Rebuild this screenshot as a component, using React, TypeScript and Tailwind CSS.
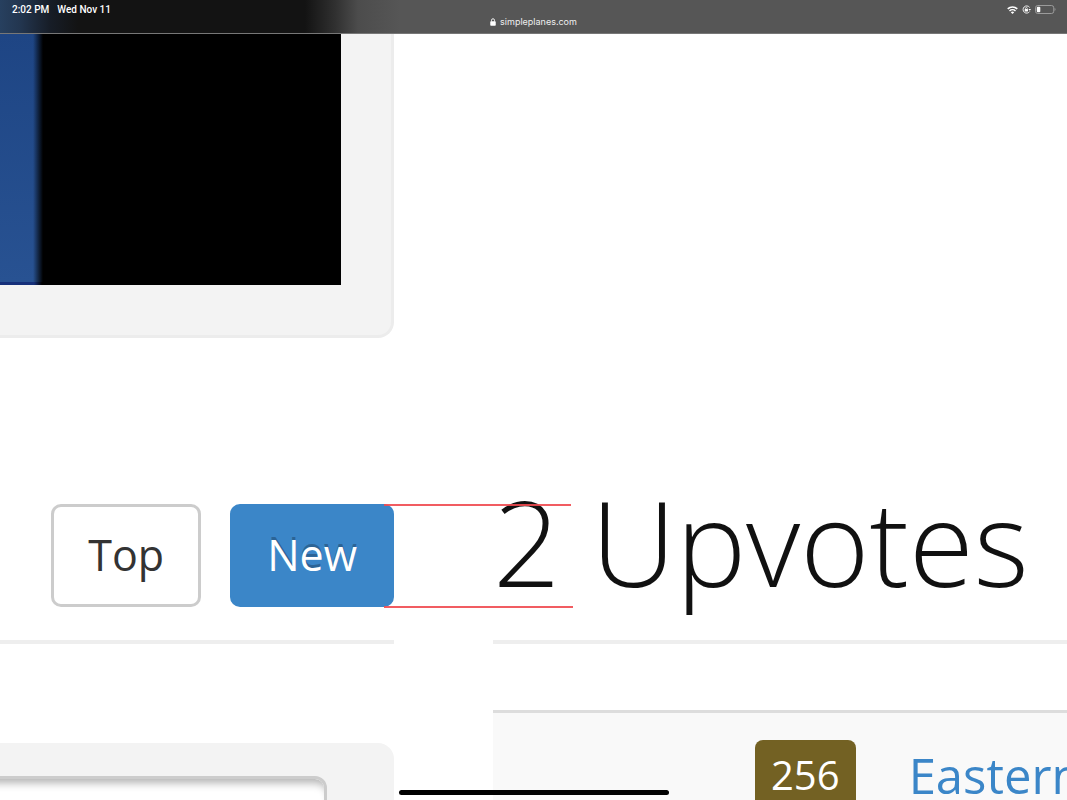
const SANS = "font-['Open_Sans','Noto_Sans',sans-serif]";

function LockIcon() {
  return (
    <svg viewBox="0 0 12 16" className="h-2 w-1.5" fill="none" aria-hidden="true">
      <path d="M3 7V4.5a3 3 0 0 1 6 0V7" stroke="white" strokeWidth="1.8" />
      <rect x="0.5" y="6.5" width="11" height="9" rx="1.5" fill="white" />
    </svg>
  );
}

function WifiIcon() {
  return (
    <svg viewBox="0 0 22 16" className="h-2 w-[11px]" fill="none" aria-hidden="true">
      <path d="M1.5 5.8a13.6 13.6 0 0 1 19 0" stroke="white" strokeWidth="3.2" />
      <path d="M5 9.8a8.6 8.6 0 0 1 12 0" stroke="white" strokeWidth="2.8" />
      <path d="M11 16l-3.4-3.6a4.9 4.9 0 0 1 6.8 0z" fill="white" />
    </svg>
  );
}

function RotationLockIcon() {
  return (
    <svg viewBox="0 0 18 18" className="h-[9px] w-[9px]" fill="none" aria-hidden="true">
      <path d="M15.2 4.8A7.2 7.2 0 1 0 15.4 13" stroke="white" strokeWidth="1.8" />
      <path d="M12.8 7.8h5.2l-2.4 3.8z" fill="white" />
      <path d="M7 8.4V6.8a1.8 1.8 0 0 1 3.6 0v1.6" stroke="white" strokeWidth="1.4" />
      <rect x="5.4" y="8" width="6.6" height="4.8" rx="0.8" fill="white" />
    </svg>
  );
}

function BatteryIcon() {
  return (
    <svg viewBox="0 0 42 18" className="h-[9px] w-[21px]" fill="none" aria-hidden="true">
      <rect x="1" y="1" width="36.5" height="16" rx="4.5" stroke="#a3a3a3" strokeWidth="1.8" />
      <rect x="3.6" y="3.4" width="7" height="11.2" rx="2" fill="white" />
      <path d="M39.4 6.2c2 .8 2 4.8 0 5.6z" fill="#a3a3a3" />
    </svg>
  );
}

function StatusBar() {
  return (
    <header className="relative h-[34px] shrink-0 border-b border-[#777] bg-[linear-gradient(to_right,#27405f_0px,#233650_20px,#171d27_50px,#131313_78px,#131313_305px,#303030_335px,#4c4c4c_358px,#565656_400px)] leading-[10px] text-white">
      <div className="flex items-start justify-between pt-[5px] pr-[11px] pl-3 font-['Roboto',sans-serif] text-[10px] font-medium">
        <div className="flex gap-2">
          <span>2:02 PM</span>
          <span>Wed Nov 11</span>
        </div>
        <div className="flex items-center gap-1">
          <WifiIcon />
          <RotationLockIcon />
          <BatteryIcon />
        </div>
      </div>
      <div className="flex items-center justify-center gap-1 pt-0.5 font-['Inter',sans-serif] text-[9px] text-[#eee]">
        <LockIcon />
        <span>simpleplanes.com</span>
      </div>
    </header>
  );
}

function VideoCard() {
  return (
    <div className="rounded-br-2xl border-r-[3px] border-b-[3px] border-[#ececec] bg-[#f3f3f3] pr-[50px] pb-[50px]">
      <div className="flex h-[251px] bg-black">
        <div className="flex w-11 flex-col">
          <div className="flex-1 bg-[linear-gradient(to_right,transparent_33px,#000_43px),linear-gradient(to_bottom,#1e4584,#285292)]" />
          <div className="h-[3px] bg-[linear-gradient(to_right,#16307a_34px,#000_42px)]" />
        </div>
      </div>
    </div>
  );
}

function SortButtons() {
  const base = "h-[103px] rounded-[10px] border-[3px] px-[34px] pt-6 pb-[25px] text-[43px] leading-[48px]";
  return (
    <div className="flex gap-[29px]">
      <button type="button" className={base + " border-[#ccc] bg-white text-[#333]"}>
        Top
      </button>
      <button
        type="button"
        className={base + " border-[#3b86c8] bg-[#3b86c8] text-white [text-shadow:0_-3px_0_rgb(0_0_0/0.25)]"}
      >
        New
      </button>
    </div>
  );
}

function CommentForm() {
  return (
    <form className="mt-[99px] rounded-tr-2xl bg-[#f3f3f3] pt-[33px] pr-[67px]">
      <input
        type="text"
        aria-label="Comment"
        className="-ml-5 block h-[112px] w-[calc(100%+20px)] rounded-xl border-[3px] border-[#ccc] bg-white shadow-[inset_0_10px_8px_-6px_rgb(0_0_0/0.3)]"
      />
    </form>
  );
}

function UpvoteList() {
  return (
    <ul className="mt-[66px] min-w-0 overflow-hidden border-t-[3px] border-[#ddd] bg-[#f9f9f9]">
      <li className="flex items-center gap-[53px] py-[27px] pl-[262px] whitespace-nowrap">
        <span className="rounded-lg bg-[#736123] px-4 py-1.5 text-[40px] leading-[58px] text-white">256</span>
        <a href="#" className="text-[49px] leading-[70px] text-[#3b86c8]">
          Eastern
        </a>
      </li>
    </ul>
  );
}

export default function App() {
  return (
    <div className={"relative flex h-screen flex-col overflow-hidden bg-white " + SANS}>
      <StatusBar />
      <main className="grid min-h-0 flex-1 grid-cols-[minmax(0,394fr)_minmax(0,574fr)] grid-rows-[auto_auto_1fr] gap-x-[99px]">
        <VideoCard />
        <div />
        <div className="mt-[142px] flex items-end justify-end border-b-4 border-[#eee] pb-[33px]">
          <SortButtons />
        </div>
        <div className="relative mt-[142px] border-b-4 border-[#eee] pb-9">
          <h2 className="text-[118px] leading-[124px] font-light whitespace-nowrap text-[#111]">2 Upvotes</h2>
          {/* guides marking the button height */}
          <div className="absolute top-6 -left-[109px] h-0.5 w-[187px] bg-[#f04a50]/90" />
          <div className="absolute top-[126px] -left-[109px] h-0.5 w-[189px] bg-[#f04a50]/90" />
        </div>
        <CommentForm />
        <UpvoteList />
      </main>
      <div className="absolute bottom-[5px] left-1/2 h-[5px] w-[270px] -translate-x-1/2 rounded-full bg-black" />
    </div>
  );
}
